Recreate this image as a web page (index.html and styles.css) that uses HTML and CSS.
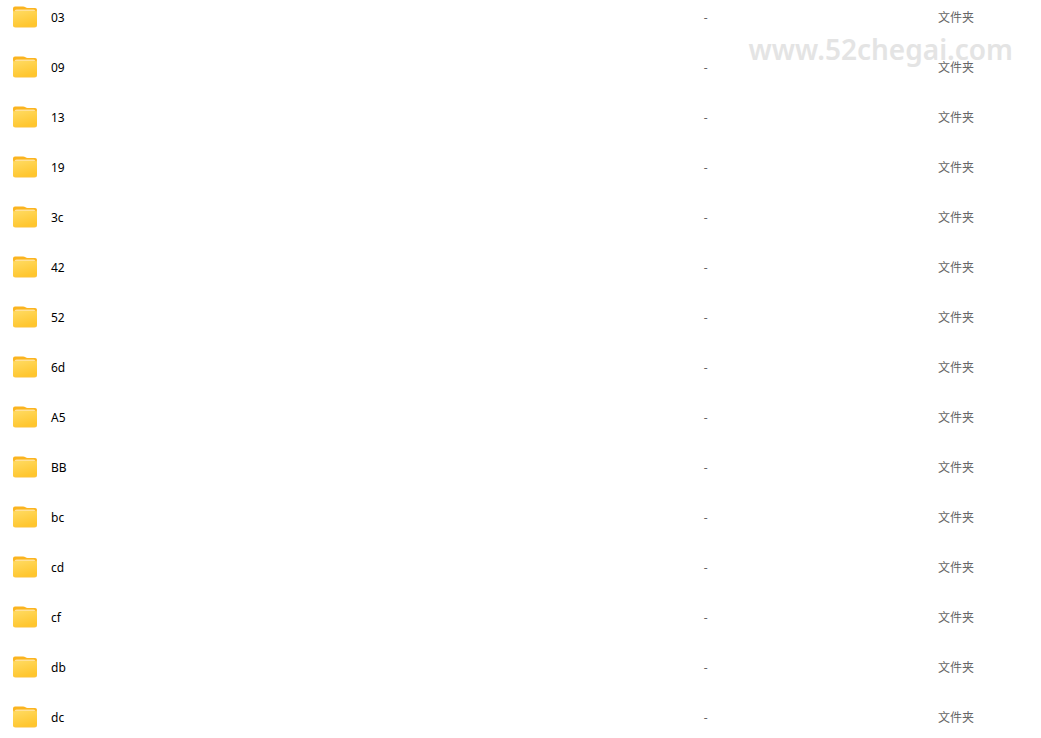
FILE: index.html
```
<!DOCTYPE html>
<html lang="zh-CN">

<head>
  <meta charset="UTF-8">
  <meta name="viewport" content="width=device-width, initial-scale=1.0">
  <title>文件夹</title>
  <link rel="stylesheet" href="styles.css">
</head>

<body>
  <svg class="sprite" aria-hidden="true">
    <defs>
      <linearGradient id="front" x1="0" y1="0" x2="0.4" y2="1">
        <stop offset="0" stop-color="#ffdb63" />
        <stop offset="1" stop-color="#ffc62e" />
      </linearGradient>
      <symbol id="folder" viewBox="0 0 24 22">
        <path d="M0 2.5Q0 .5 2 .5H10Q11.5 .5 12.5 1.3Q13.3 2 14.5 2H22Q24 2 24 4V12H0Z" fill="#fbb41f" />
        <path d="M1.5 5.5Q1.5 3.5 3.5 3.5H20.5Q22.5 3.5 22.5 5.5V8H1.5Z" fill="#ffe19a" />
        <path d="M0 4Q1.2 6 3 5H21Q23.2 5 24 4V19Q24 21.5 21.5 21.5H2.5Q0 21.5 0 19Z" fill="#fcc243" />
        <path d="M0 5Q1.2 6 3 5H21Q23.2 6 24 5V18.5Q24 20.8 21.5 20.8H2.5Q0 20.8 0 18.5Z" fill="url(#front)" />
      </symbol>
    </defs>
  </svg>

  <div class="watermark">www.52chegai.com</div>

  <table class="files">
    <tbody id="rows"></tbody>
  </table>

  <script>
    const folders = ["03", "09", "13", "19", "3c", "42", "52", "6d", "A5", "BB", "bc", "cd", "cf", "db", "dc"];

    document.getElementById("rows").innerHTML = folders.map((name) => `
      <tr>
        <td class="name"><div class="file"><svg class="icon" aria-hidden="true"><use href="#folder"></use></svg><span>${name}</span></div></td>
        <td class="size">-</td>
        <td class="type">文件夹</td>
      </tr>`).join("");
  </script>
</body>

</html>
```

FILE: styles.css
```
* {
  box-sizing: border-box;
}

body {
  margin: 0;
  height: 100vh;
  overflow: hidden;
  position: relative;
  background: #fff;
  font-family: "Noto Sans", "Noto Sans CJK SC", sans-serif;
  font-size: 12px;
  line-height: 18px;
}

.sprite {
  position: absolute;
  width: 0;
  height: 0;
}

/* list is scrolled a little, so the first row starts above the top edge */
.files {
  position: relative;
  width: 100%;
  margin-top: -7px;
  border-collapse: collapse;
  table-layout: fixed;
}

.files td {
  height: 50px;
  padding: 0;
  vertical-align: middle;
  color: #666;
}

.files .name {
  width: 67.5%;
  padding-left: 13px;
  color: #000;
}

.files .size {
  width: 22.5%;
  padding-left: 1px;
}

.files .type {
  padding: 0 0 2px 1px;
  font-family: "Noto Sans CJK SC", sans-serif;
}

.file {
  display: flex;
  align-items: center;
  gap: 14px;
}

.icon {
  width: 24px;
  height: 22px;
  margin-bottom: 2px;
}

.watermark {
  position: absolute;
  top: 29px;
  right: 28px;
  color: #e4e4e4;
  font-family: "Noto Sans", sans-serif;
  font-size: 28px;
  font-weight: 600;
  line-height: 40px;
}
```
